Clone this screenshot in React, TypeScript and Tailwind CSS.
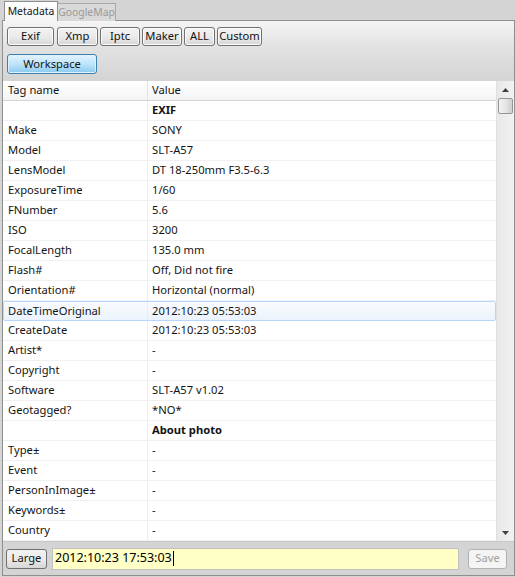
import React from "react";

const rows: { tag: string; value: string; bold?: boolean; sel?: boolean }[] = [
  { tag: "", value: "EXIF", bold: true },
  { tag: "Make", value: "SONY" },
  { tag: "Model", value: "SLT-A57" },
  { tag: "LensModel", value: "DT 18-250mm F3.5-6.3" },
  { tag: "ExposureTime", value: "1/60" },
  { tag: "FNumber", value: "5.6" },
  { tag: "ISO", value: "3200" },
  { tag: "FocalLength", value: "135.0 mm" },
  { tag: "Flash#", value: "Off, Did not fire" },
  { tag: "Orientation#", value: "Horizontal (normal)" },
  { tag: "DateTimeOriginal", value: "2012:10:23 05:53:03", sel: true },
  { tag: "CreateDate", value: "2012:10:23 05:53:03" },
  { tag: "Artist*", value: "-" },
  { tag: "Copyright", value: "-" },
  { tag: "Software", value: "SLT-A57 v1.02" },
  { tag: "Geotagged?", value: "*NO*" },
  { tag: "", value: "About photo", bold: true },
  { tag: "Type±", value: "-" },
  { tag: "Event", value: "-" },
  { tag: "PersonInImage±", value: "-" },
  { tag: "Keywords±", value: "-" },
  { tag: "Country", value: "-" },
];

function Btn({ label, w }: { label: string; w: string }) {
  return (
    <div
      className={`${w} h-[19px] flex items-center justify-center rounded-[3px] border border-[#707070] bg-gradient-to-b from-[#f2f2f2] via-[#ebebeb] to-[#d6d6d6] text-[#111] shadow-[inset_0_0_0_1px_#fcfcfc]`}
    >
      {label}
    </div>
  );
}

export default function App() {
  return (
    <div
      className="w-[516px] h-[577px] bg-[#d4d4d4] text-[11.2px] text-[#141414] flex flex-col overflow-hidden"
      style={{ fontFamily: '"Segoe UI", "Noto Sans", "Open Sans", sans-serif' }}
    >
      {/* tabs */}
      <div className="h-[21px] flex items-end pl-[4px] relative z-10 text-[10.4px]">
        <div className="w-[54px] h-[20px] border border-b-0 border-[#8e8f8f] bg-gradient-to-b from-[#ffffff] to-[#f4f4f4] flex items-center justify-center leading-none">
          Metadata
        </div>
        <div className="w-[58px] h-[18px] border border-l-0 border-b-0 border-[#a8a8a8] bg-[#d9d9d9] flex items-center justify-center text-[#9a9a9a] leading-none">
          GoogleMap
        </div>
      </div>
      {/* panel */}
      <div className="flex-1 ml-[2px] mr-[1px] mb-[1px] border border-[#8e8f8f] flex flex-col min-h-0 -mt-px">
        <div className="bg-gradient-to-b from-[#f5f5f5] via-[#e3e3e3] via-40% to-[#d4d4d4] to-100% px-[4px] pt-[6px] pb-[7px] flex flex-col gap-[8px]">
          <div className="flex">
            <Btn label="Exif" w="w-[47px]" />
            <div className="w-[3px]" />
            <Btn label="Xmp" w="w-[41px]" />
            <div className="w-[2px]" />
            <Btn label="Iptc" w="w-[40px]" />
            <div className="w-[2px]" />
            <Btn label="Maker" w="w-[40px]" />
            <div className="w-[2px]" />
            <Btn label="ALL" w="w-[31px]" />
            <div className="w-[2px]" />
            <Btn label="Custom" w="w-[45px]" />
          </div>
          <div className="w-[90px] h-[20px] flex items-center justify-center rounded-[3px] border border-[#3c7fb1] bg-gradient-to-b from-[#e5f4fc] via-[#bde4fa] to-[#8cc9ee] shadow-[inset_0_0_0_1px_#dff2fc]">
            Workspace
          </div>
        </div>
        {/* table */}
        <div className="h-[460px] flex bg-white">
          <div className="flex-1 flex flex-col">
            <div className="h-[20px] flex bg-gradient-to-b from-[#ffffff] to-[#f3f4f6] border-b border-[#d5d5d5] items-center">
              <div className="w-[145px] pl-[5px] border-r border-[#e3e3e3] h-full flex items-center">Tag name</div>
              <div className="pl-[4px]">Value</div>
            </div>
            {rows.map((r, i) => (
              <div
                key={i}
                className={
                  r.sel
                    ? "h-[20px] flex items-center rounded-[2px] border border-[#b8d6fb] bg-gradient-to-b from-[#fafbfd] to-[#ebf3fd]"
                    : "h-[20px] flex items-center border-b border-[#f0f0f0]"
                }
              >
                <div
                  className={`${r.sel ? "w-[144px]" : "w-[145px]"} ${r.sel ? "pl-[4px]" : "pl-[5px]"} h-full flex items-center border-r border-[#ededed]`}
                >
                  {r.tag}
                </div>
                <div className={`pl-[4px] ${r.bold ? "font-bold" : ""}`}>{r.value}</div>
              </div>
            ))}
          </div>
          {/* scrollbar */}
          <div className="w-[18px] bg-gradient-to-r from-[#e8e8e8] to-[#f2f2f2] border-l border-[#e0e0e0] flex flex-col items-center">
            <div className="h-[17px] flex items-center justify-center">
              <svg width="7" height="4" viewBox="0 0 7 4">
                <path d="M3.5 0 L7 4 L0 4 Z" fill="#404040" />
              </svg>
            </div>
            <div className="w-[15px] h-[16px] rounded-[2px] border border-[#959595] bg-gradient-to-r from-[#f3f3f3] via-[#e6e6e6] to-[#cfcfcf]" />
            <div className="flex-1" />
            <div className="h-[17px] flex items-center justify-center">
              <svg width="7" height="4" viewBox="0 0 7 4">
                <path d="M0 0 L7 0 L3.5 4 Z" fill="#404040" />
              </svg>
            </div>
          </div>
        </div>
        {/* bottom bar */}
        <div className="flex-1 flex items-center px-[3px] gap-[5px] border-t border-[#c8c8c8]">
          <div className="w-[41px] h-[20px] flex items-center justify-center rounded-[3px] border border-[#707070] bg-gradient-to-b from-[#f2f2f2] via-[#ebebeb] to-[#d6d6d6]">
            Large
          </div>
          <div className="w-[407px] h-[22px] bg-[#ffffc6] border border-[#c0c0c0] flex items-center pl-[2px] text-[12.5px] text-black">
            2012:10:23 17:53:03
            <span className="inline-block w-px h-[15px] bg-black ml-px" />
          </div>
          <div className="ml-[4px] w-[39px] h-[20px] flex items-center justify-center rounded-[3px] border border-[#adb2b5] bg-[#f4f4f4] text-[#a0a0a0]">
            Save
          </div>
        </div>
      </div>
    </div>
  );
}
